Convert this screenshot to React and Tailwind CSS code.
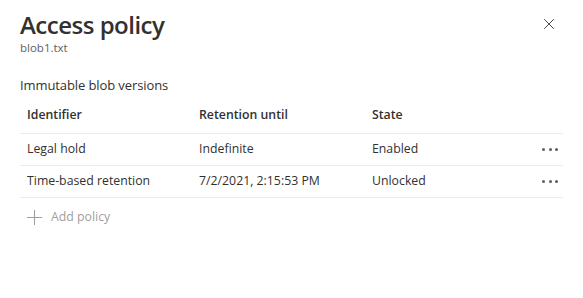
import { X } from 'lucide-react'

const filas = [
  { id: 'Legal hold', ate: 'Indefinite', estado: 'Enabled' },
  { id: 'Time-based retention', ate: '7/2/2021, 2:15:53 PM', estado: 'Unlocked' },
]

function Reticencias() {
  return (
    <div className="flex gap-[3.5px] items-center">
      <span className="w-[3px] h-[3px] rounded-full bg-[#605e5c]" />
      <span className="w-[3px] h-[3px] rounded-full bg-[#605e5c]" />
      <span className="w-[3px] h-[3px] rounded-full bg-[#605e5c]" />
    </div>
  )
}

export default function App() {
  return (
    <div className="w-[583px] h-[298px] bg-white pl-5 pr-5 pt-[9px] text-[#323130] font-['Open_Sans',sans-serif] overflow-hidden">
      {/* Cabeçalho */}
      <div className="flex justify-between items-start">
        <div>
          <h1 className="text-[24px] leading-[32px] font-semibold tracking-[-0.5px]">Access policy</h1>
          <p className="text-[11.5px] leading-[16px] text-[#605e5c] -mt-[1px]">blob1.txt</p>
        </div>
        <button className="mt-[6px] mr-[5px] text-[#323130]">
          <X size={18} strokeWidth={1.2} />
        </button>
      </div>

      <p className="text-[13px] leading-[18px] mt-[20px] tracking-[-0.1px]">Immutable blob versions</p>

      {/* Tabela */}
      <div className="mt-[4px] text-[12.3px]">
        <div className="grid grid-cols-[172px_173px_1fr_40px] h-[36px] items-center border-b border-[#edebe9] px-[7px] font-semibold">
          <span>Identifier</span>
          <span>Retention until</span>
          <span>State</span>
          <span />
        </div>
        {filas.map(f => (
          <div key={f.id} className="grid grid-cols-[172px_173px_1fr_40px] h-[32px] items-center border-b border-[#edebe9] pl-[7px] pr-[5px]">
            <span>{f.id}</span>
            <span>{f.ate}</span>
            <span>{f.estado}</span>
            <div className="flex justify-end"><Reticencias /></div>
          </div>
        ))}
        <div className="flex items-center gap-[9px] h-[38px] pl-[7px] text-[#a19f9d]">
          <svg width="15" height="15" viewBox="0 0 15 15" fill="none" stroke="currentColor" strokeWidth="1.1">
            <path d="M7.5 0v15M0 7.5h15" />
          </svg>
          <span>Add policy</span>
        </div>
      </div>
    </div>
  )
}
